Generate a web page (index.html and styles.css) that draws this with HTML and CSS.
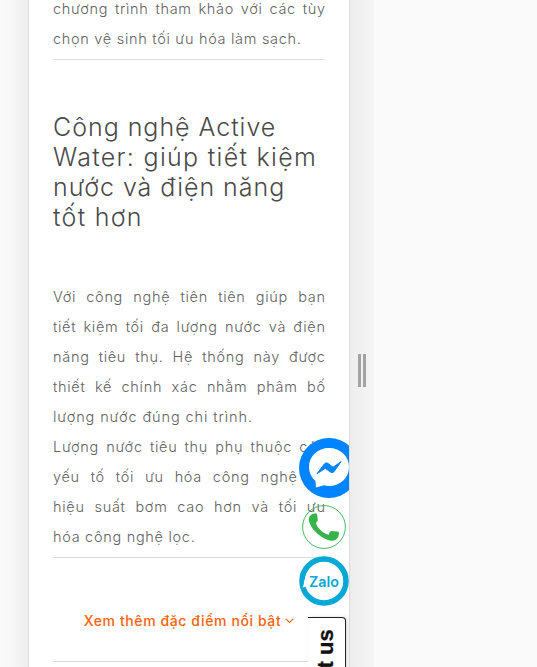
FILE: index.html
```html
<!DOCTYPE html>
<html lang="vi">
<head>
<meta charset="utf-8">
<title>Công nghệ Active Water</title>
<link rel="stylesheet" href="styles.css">
</head>
<body>
<div class="stage">
  <main class="phone">
    <section class="intro copy">
      <p><span class="line">chương trình tham khảo với các tùy</span><span class="line end">chọn vệ sinh tối ưu hóa làm sạch.</span></p>
    </section>
    <section class="feature">
      <h2><span>Công nghệ Active</span><span class="wide">Water: giúp tiết kiệm</span><span>nước và điện năng</span><span class="wide">tốt hơn</span></h2>
      <div class="copy">
        <p><span class="line">Với công nghệ tiên tiên giúp bạn</span><span class="line">tiết kiệm tối đa lượng nước và điện</span><span class="line">năng tiêu thụ. Hệ thống này được</span><span class="line">thiết kế chính xác nhằm phâm bố</span><span class="line end loose">lượng nước đúng chi trình.</span></p>
        <p><span class="line">Lượng nước tiêu thụ phụ thuộc các</span><span class="line">yếu tố tối ưu hóa công nghệ và</span><span class="line">hiệu suất bơm cao hơn và tối ưu</span><span class="line end">hóa công nghệ lọc.</span></p>
      </div>
    </section>
    <div class="more"><span>Xem thêm đặc điểm nổi bật</span><svg width="9" height="6" viewBox="0 0 9 6"><path d="M.8 .8 4.5 4.5 8.2 .8" fill="none" stroke="#ff6207" stroke-width="1.1"/></svg></div>
    <div class="contacts">
      <svg class="messenger" viewBox="0 0 60 60"><circle cx="30" cy="30" r="30" fill="#0084ff"/><path d="M30 10C18.500 10 10 18.200 10 29C10 34.500 12.500 39.500 16.500 43L17 49.500L25 47.300C26.600 47.800 28.300 48 30 48C41.500 48 50 39.800 50 29S41.500 10 30 10Z" fill="#fff"/><path d="M18 35.800 25.300 26Q27 24 29.200 25.500L34 29.300 42.200 23.500 35 33.700Q33.200 35.500 31 33.800L26.300 30.300Z" fill="#0084ff" stroke="#0084ff" stroke-linejoin="round"/></svg>
      <svg class="call" viewBox="0 0 44 44"><circle cx="22" cy="22" r="21.400" fill="none" stroke="#45b960" stroke-width="1"/><path d="M7.500 11.200Q9.500 8.700 13.500 8.200Q15 8.300 15.200 10L15.800 15.200Q15.800 16.600 14 17.600Q14.300 21.500 19.200 25.800Q23.500 29.500 26.700 29.700Q27.600 26.500 29 26.100L35.500 26.500Q37.200 26.700 37 28.400Q36.800 32.300 34.200 34.500Q29 37.700 20.200 32.200Q9.500 25.400 7 16.200Q6.500 13.500 7.500 11.200Z" fill="#36b44b"/></svg>
      <svg class="zalo" viewBox="0 0 50 50"><circle cx="25" cy="25" r="22" fill="#fff" stroke="#05a8d6" stroke-width="5.500"/><path d="M5 23Q5.500 28 3.500 31.500L8 30.500Z" fill="#fff"/><text x="10" y="30.500" textLength="30" lengthAdjust="spacingAndGlyphs">Zalo</text></svg>
    </div>
    <div class="tab"><span>Contact us</span></div>
  </main>
  <div class="handle"><i></i><i></i></div>
</div>
</body>
</html>
```
FILE: styles.css
```css
* { box-sizing: border-box; }
body { margin: 0; overflow: hidden; background: #fafafa; font-family: Inter, "Open Sans", sans-serif; }
.stage { display: flex; width: 374px; height: 667px; padding-left: 28px; background: linear-gradient(90deg, #fafafa 0, #f7f7f7 12px, #eee 28px, #ededed 350px, #f5f5f5 374px); }
.phone { position: relative; width: 322px; height: 667px; padding: 0 24px; overflow: hidden; background: #fff; border: 0 solid #dcdcdc; border-width: 0 1px; }
.copy { color: #626262; font-size: 14.5px; font-weight: 300; line-height: 30px; letter-spacing: .7px; border-bottom: 1px solid #ddd; }
.copy p { margin: 0; }
.line { display: block; height: 30px; margin-right: -.7px; white-space: nowrap; text-align: justify; text-align-last: justify; }
.line.end { text-align-last: left; }
.line.loose { letter-spacing: .9px; }
.intro { height: 60px; overflow: hidden; }
.intro p { margin-top: -6px; }
h2 { height: 120px; margin: 52px 0 50px; color: #4a4a4a; font-size: 25px; font-weight: 300; line-height: 30px; letter-spacing: .97px; }
h2 span { display: block; white-space: nowrap; }
h2 .wide { letter-spacing: 1.3px; }
.feature .copy { height: 276px; }
.more { display: flex; align-items: center; justify-content: center; gap: 4px; height: 104px; padding: 22px 0 0; border-bottom: 1px solid #ddd; color: #ff6207; font-size: 14px; font-weight: 500; letter-spacing: .6px; white-space: nowrap; }
.contacts svg { position: absolute; }
.messenger { left: 270px; top: 438px; width: 60px; height: 60px; }
.call { left: 273px; top: 505px; width: 44px; height: 44px; }
.zalo { left: 270px; top: 556px; width: 50px; height: 50px; }
.zalo text { font: 600 14px Inter, sans-serif; fill: #05a8d6; }
.tab { position: absolute; left: 279px; top: 617px; width: 38px; height: 140px; border: 1px solid #222; border-left: 0; border-radius: 0 4px 0 0; background: #fff; box-shadow: 2px 0 4px #ddd; }
.tab span { display: block; width: 38px; height: 126px; margin: 11px 0 0 -1px; writing-mode: vertical-rl; transform: rotate(180deg); text-align: right; color: #111; font: 700 22px/38px "Liberation Sans", sans-serif; -webkit-text-stroke: .3px #111; }
.handle { display: flex; gap: 2px; margin: 354px 0 0 8px; height: 33px; }
.handle i { width: 3px; background: #a3a3a3; }
```
